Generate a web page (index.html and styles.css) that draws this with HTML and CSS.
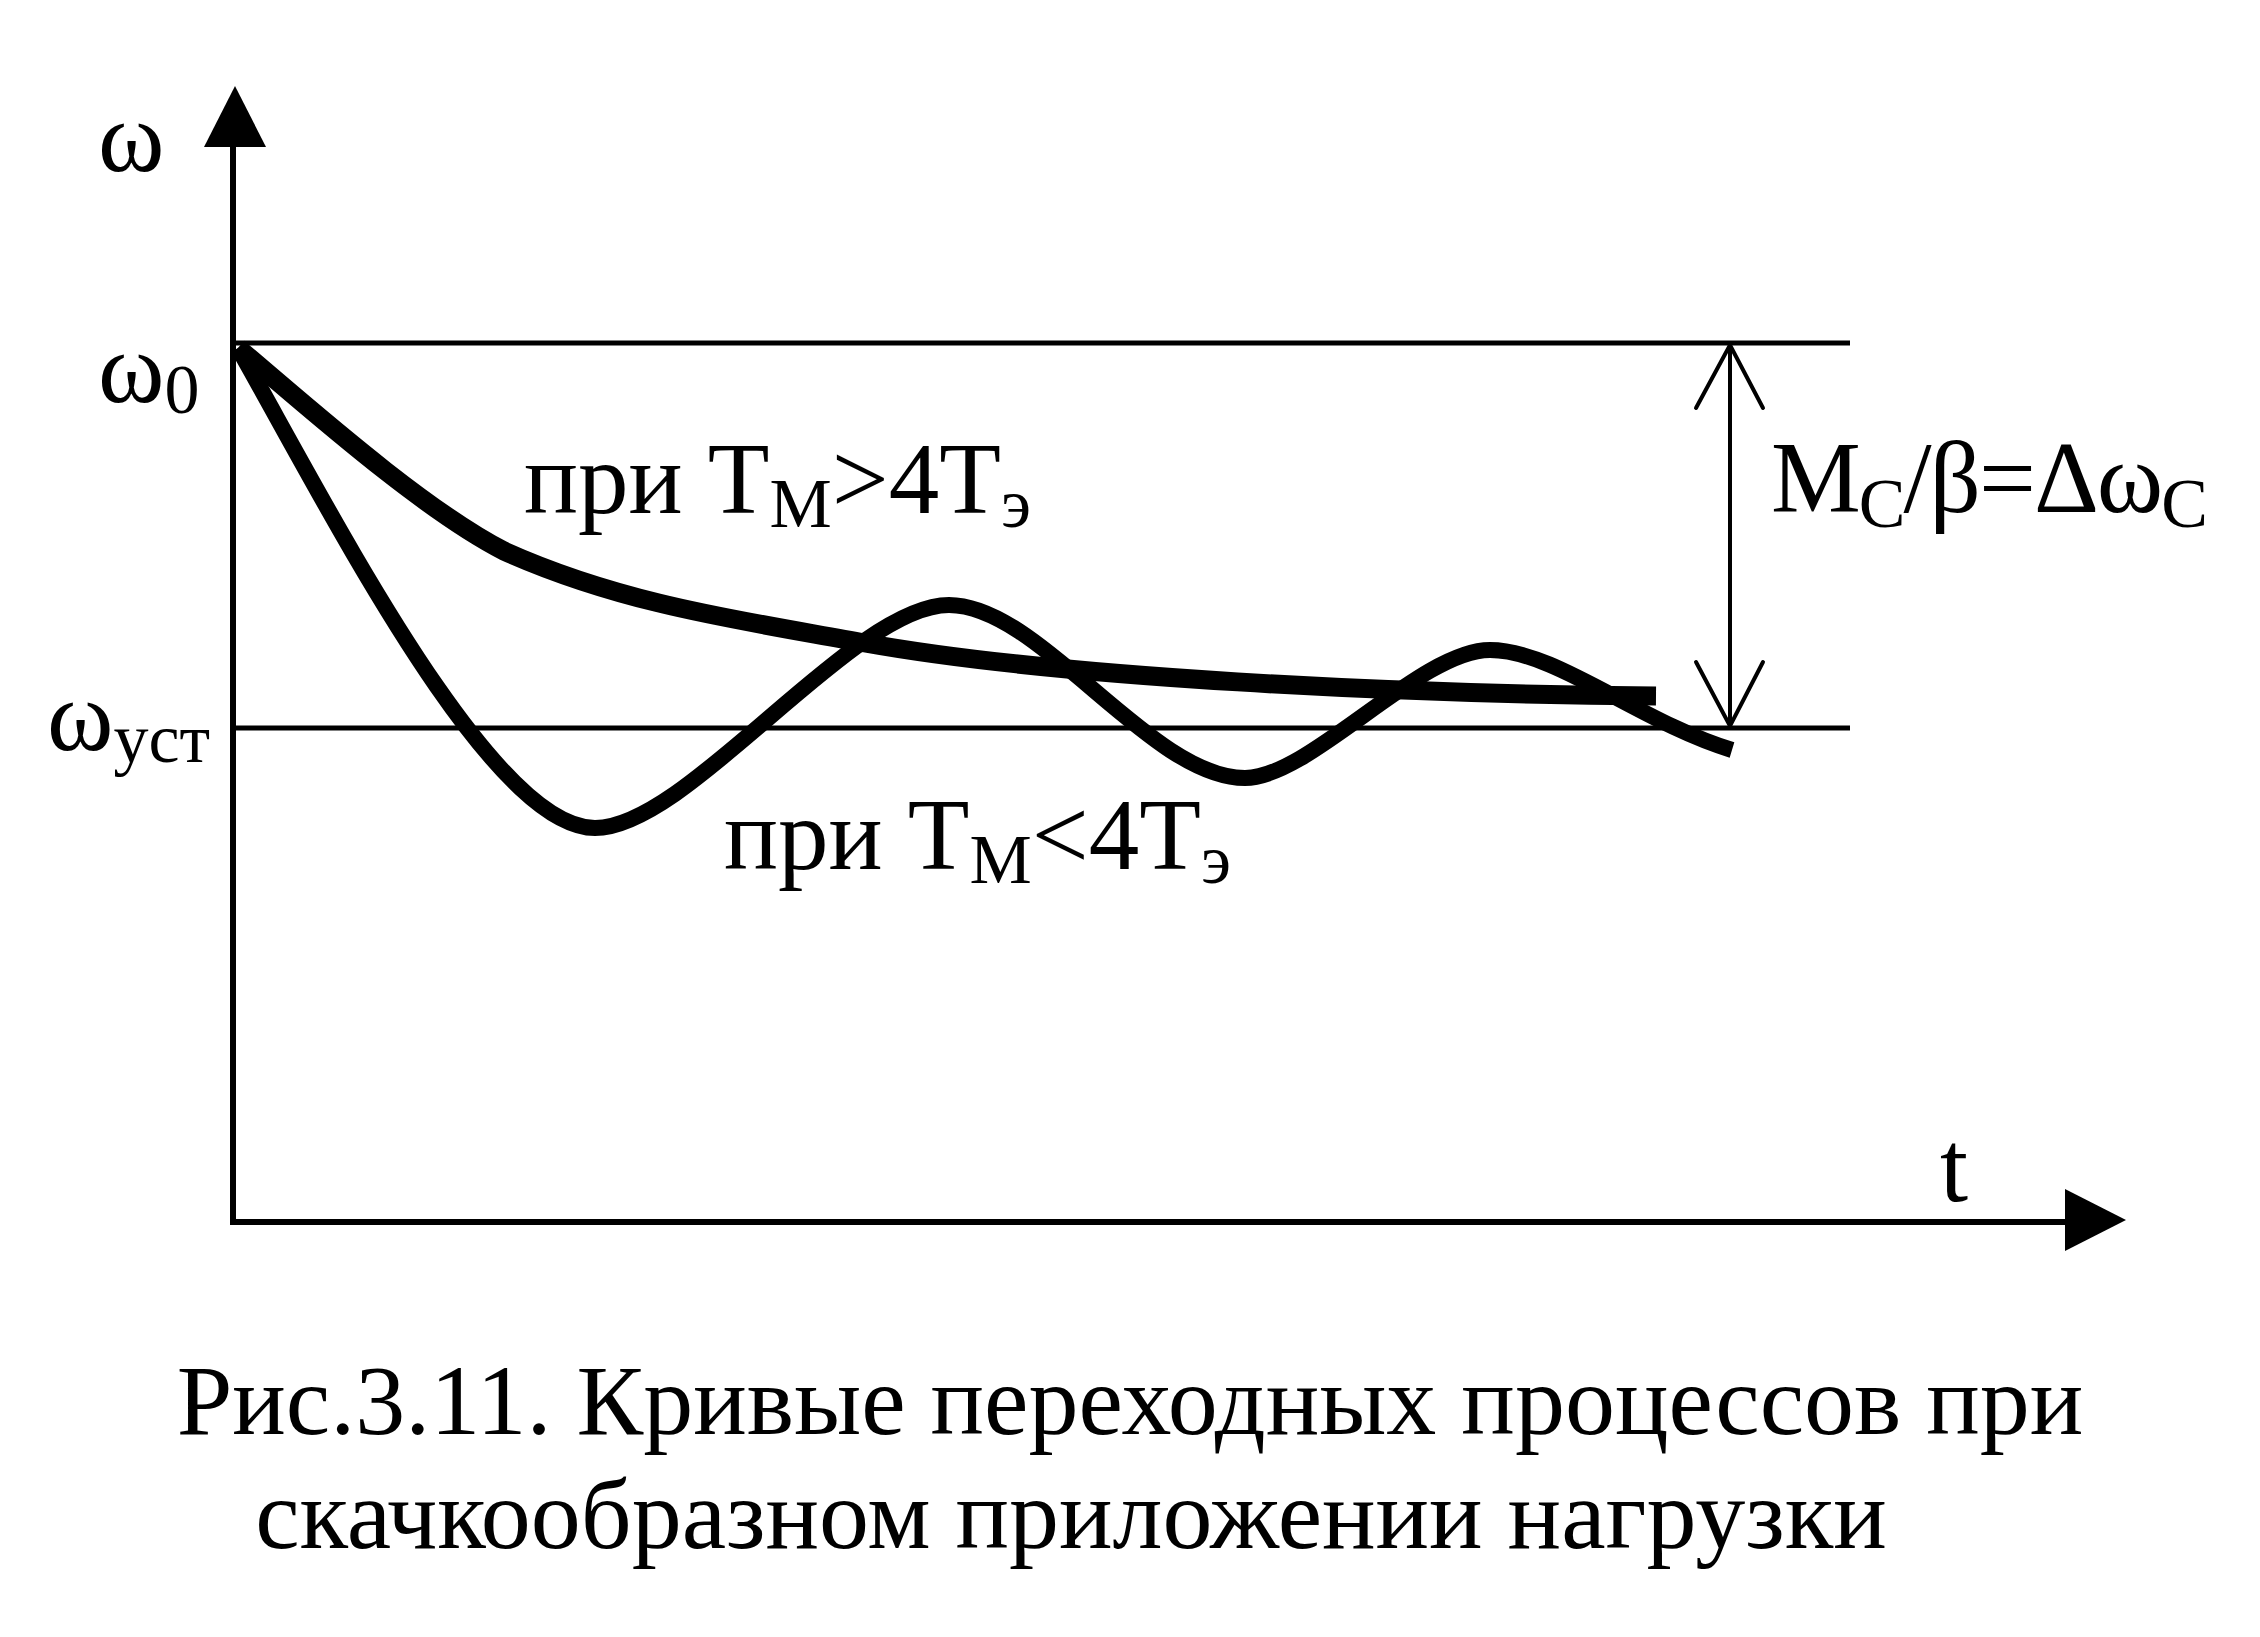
FILE: index.html
```html
<!DOCTYPE html>
<html lang="ru">
<head>
<meta charset="utf-8">
<title>Рис.3.11</title>
<link rel="stylesheet" href="styles.css">
</head>
<body>
<figure class="figure">
  <svg class="plot" width="2260" height="1290" viewBox="0 0 2260 1290" xmlns="http://www.w3.org/2000/svg">
    <!-- axes -->
    <line class="axis" x1="233" y1="140" x2="233" y2="1225"/>
    <polygon class="head" points="204,147 266,147 235,86"/>
    <line class="axis" x1="230" y1="1222" x2="2070" y2="1222"/>
    <polygon class="head" points="2065,1189 2065,1251 2126,1220"/>
    <!-- guide lines -->
    <line class="guide" x1="233" y1="343" x2="1850" y2="343"/>
    <line class="guide" x1="233" y1="728" x2="1850" y2="728"/>
    <!-- dimension arrow -->
    <line class="dim" x1="1730" y1="345" x2="1730" y2="726"/>
    <polyline class="dim" points="1696,408 1730,345 1763,408"/>
    <polyline class="dim" points="1696,662 1730,726 1763,662"/>
    <!-- curves -->
    <path class="curve curve-mono" d="M238,348 C300,400 420,508 504,551 C624,605 745,621 865,643 C1060,678 1400,694 1656,696"/>
    <path class="curve curve-osc" d="M238,348 C330,510 490,828 595,828 C688,828 852,605 949,605 C1040,605 1150,778 1245,778 C1310,778 1420,650 1490,650 C1555,650 1640,722 1732,750"/>
    <!-- labels -->
    <text class="lbl" x="98" y="171">ω</text>
    <text class="lbl" x="98" y="402">ω<tspan class="sub" dy="11">0</tspan></text>
    <text class="lbl" x="47" y="750">ω<tspan class="sub" dy="12">уст</tspan></text>
    <text class="lbl" x="524" y="513">при Т<tspan class="sub" dy="14">М</tspan><tspan dy="-14">&gt;4Т</tspan><tspan class="sub" dy="14">э</tspan></text>
    <text class="lbl" x="724" y="869">при Т<tspan class="sub" dy="14">М</tspan><tspan dy="-14">&lt;4Т</tspan><tspan class="sub" dy="14">э</tspan></text>
    <text class="lbl lbl-dim" x="1771" y="512">М<tspan class="sub" dy="15">С</tspan><tspan dy="-15">/β=Δω</tspan><tspan class="sub" dy="15">С</tspan></text>
    <text class="lbl" x="1940" y="1201">t</text>
  </svg>
  <figcaption class="caption">
    <span class="caption-line">Рис.3.11. Кривые переходных процессов при</span>
    <span class="caption-line caption-line-2">скачкообразном приложении нагрузки</span>
  </figcaption>
</figure>
</body>
</html>
```

FILE: styles.css
```css
html, body {
  margin: 0;
  padding: 0;
  background: #ffffff;
}

body {
  width: 2260px;
  height: 1637px;
  overflow: hidden;
  color: #000000;
  font-family: "Liberation Serif", "Times New Roman", serif;
}

.figure {
  margin: 0;
  width: 2260px;
  display: flex;
  flex-direction: column;
}

.plot {
  display: block;
}

.axis {
  stroke: #000;
  stroke-width: 6;
}

.head {
  fill: #000;
}

.guide {
  stroke: #000;
  stroke-width: 5;
}

.dim {
  fill: none;
  stroke: #000;
  stroke-width: 4;
  stroke-linecap: round;
  stroke-linejoin: miter;
}

.curve {
  fill: none;
  stroke: #000;
  stroke-linecap: butt;
  stroke-linejoin: round;
}

.curve-mono {
  stroke-width: 19;
}

.curve-osc {
  stroke-width: 16;
}

.lbl {
  font-family: "Liberation Serif", "Times New Roman", serif;
  font-size: 101px;
  fill: #000;
}

.lbl-dim {
  letter-spacing: -2px;
}

.sub {
  font-size: 70px;
}

.caption {
  margin: 54px 0 0 0;
  display: flex;
  flex-direction: column;
  font-size: 100px;
  line-height: 114px;
}

.caption-line {
  display: block;
  text-align: center;
}

.caption-line-2 {
  padding-right: 118px;
}
```
